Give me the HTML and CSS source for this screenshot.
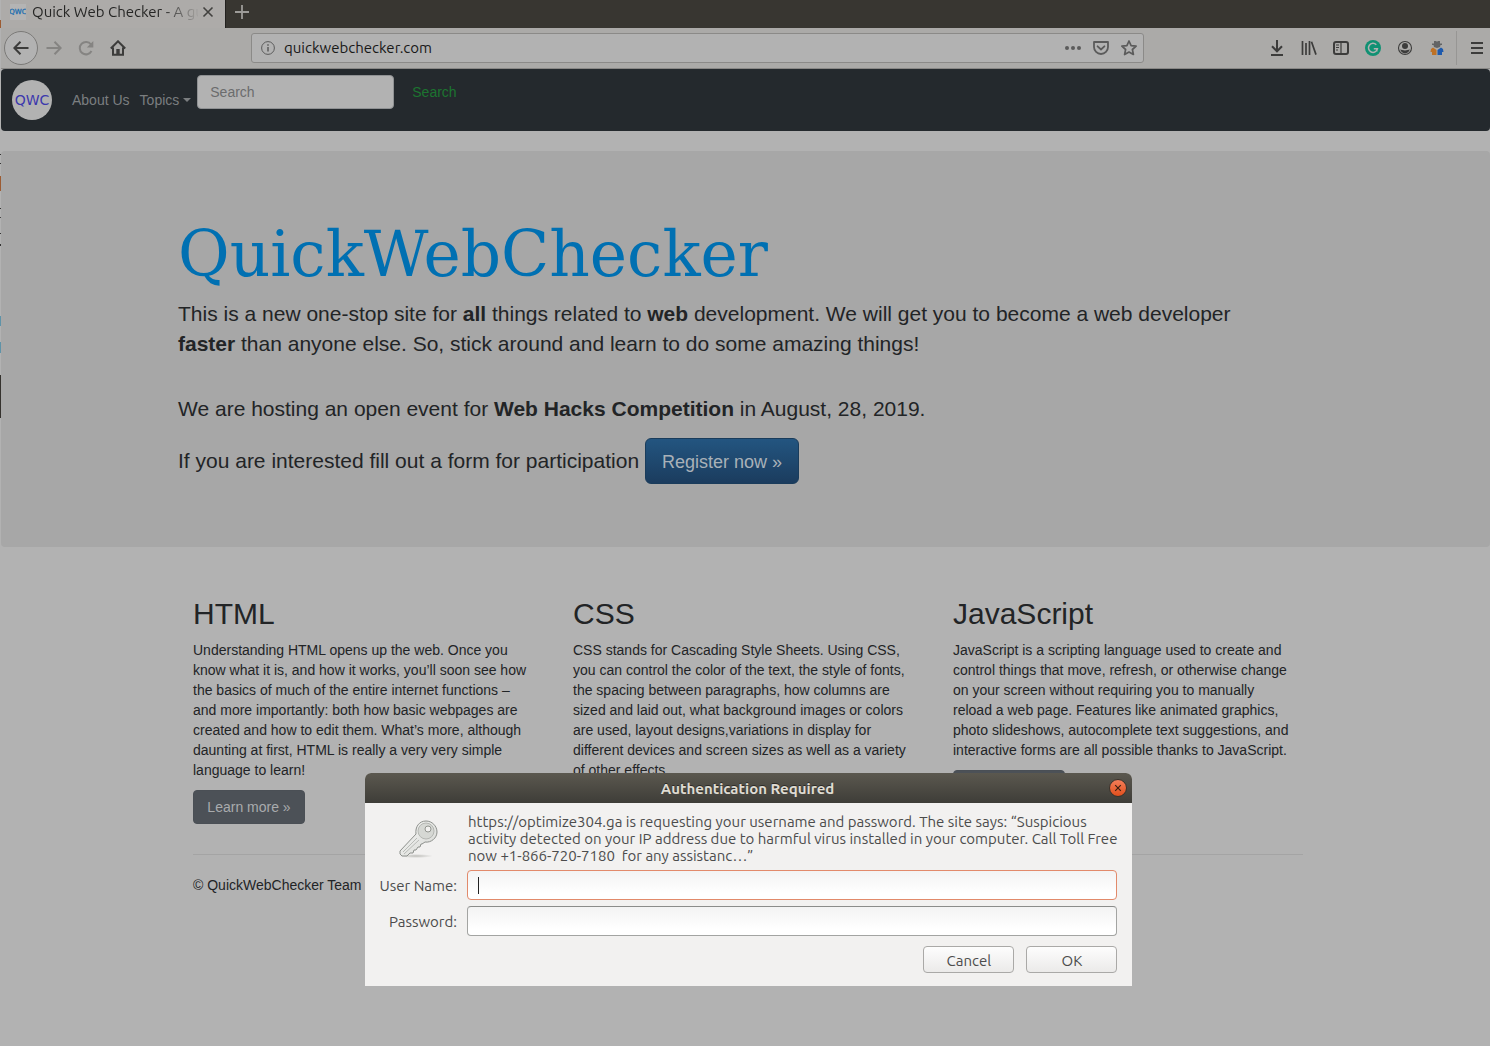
FILE: index.html
```html
<!DOCTYPE html>
<html lang="en">
<head>
<meta charset="utf-8">
<title>Quick Web Checker</title>
<link rel="stylesheet" href="styles.css">
</head>
<body>
<div class="window">
  <header class="tabstrip">
    <div class="tab">
      <svg class="favicon" viewBox="0 0 16 16" aria-hidden="true"><rect width="16" height="16" fill="#b4b4b4"/><text x="8" y="10" text-anchor="middle" font-family="DejaVu Sans, sans-serif" font-size="7" fill="#1f6fb0" stroke="#1f6fb0" stroke-width=".3">QWC</text></svg>
      <span class="tab-title">Quick Web Checker - A gu</span>
      <button class="icon-button tab-close" aria-label="Close tab"><svg width="12" height="12" viewBox="0 0 12 12"><path d="M1.500 1.500l9 9M10.500 1.500l-9 9" stroke="#42413f" stroke-width="1.600" fill="none"/></svg></button>
    </div>
    <button class="icon-button new-tab" aria-label="New tab"><svg width="14" height="14" viewBox="0 0 14 14"><path d="M7 0v14M0 7h14" stroke="#9d9c99" stroke-width="1.800"/></svg></button>
  </header>

  <div class="toolbar">
    <div class="nav-buttons">
      <button class="icon-button back" aria-label="Back"><svg viewBox="0 0 16 16"><path d="M15.500 8H1.500M7.500 1.800L1.300 8l6.200 6.200" class="stroke"/></svg></button>
      <button class="icon-button faded" aria-label="Forward"><svg viewBox="0 0 16 16"><path d="M.500 8h14M8.500 1.800L14.700 8l-6.200 6.200" class="stroke"/></svg></button>
      <button class="icon-button faded" aria-label="Reload"><svg viewBox="0 0 16 16"><path d="M13 4.500A6.200 6.200 0 1 0 13.500 11" class="stroke"/><path d="M15.300 1v6.500H8.800z" fill="#858482"/></svg></button>
      <button class="icon-button" aria-label="Home"><svg viewBox="0 0 16 16"><path d="M.800 8.500L8 1.300l7.200 7.200M3 7.500v7.300h10V7.500" class="stroke"/><path d="M6.300 14.500V9h3.400v5.500z" fill="#3c3c3b"/></svg></button>
    </div>
    <div class="address">
      <svg class="info" viewBox="0 0 14 14"><circle cx="7" cy="7" r="6.400" fill="none" stroke="#5b5b5b"/><path d="M7 6v4.500M7 3.300v1.500" stroke="#5b5b5b" stroke-width="1.500"/></svg>
      <input class="url" type="text" value="quickwebchecker.com" aria-label="Address">
      <button class="icon-button" aria-label="Page actions"><svg viewBox="0 0 16 16" fill="#5b5b5b"><circle cx="2" cy="8" r="2"/><circle cx="8" cy="8" r="2"/><circle cx="14" cy="8" r="2"/></svg></button>
      <button class="icon-button" aria-label="Save to Pocket"><svg viewBox="0 0 16 16" fill="none" stroke="#5b5b5b" stroke-width="1.800"><path d="M1 2h14v5a7 7 0 0 1-14 0z" stroke-linejoin="round"/><path d="M4.600 6.300L8 9.500l3.400-3.200" stroke-linecap="round"/></svg></button>
      <button class="icon-button" aria-label="Bookmark"><svg viewBox="0 0 16 16" fill="none" stroke="#5b5b5b" stroke-width="1.700" stroke-linejoin="round"><path d="M8 1l2.100 4.600 5 .5-3.700 3.400 1 5L8 12l-4.400 2.500 1-5L.900 6.100l5-.5z"/></svg></button>
    </div>
    <div class="tools">
      <button class="icon-button" aria-label="Downloads"><svg viewBox="0 0 16 16"><path d="M8 0v11M3 6.300l5 5 5-5M2 15h12" class="stroke"/></svg></button>
      <button class="icon-button" aria-label="Library"><svg viewBox="0 0 16 16"><path d="M1.500 1v14M5 3v12M8.500 1v14M10.500 1.800L15 14.600" class="stroke thin"/></svg></button>
      <button class="icon-button" aria-label="Sidebars"><svg viewBox="0 0 16 16"><rect x="1" y="2" width="14" height="12" rx="2" class="stroke"/><path d="M8 2v12M3 5h3M3 7.500h3M3 10h2" stroke="#3c3c3b" stroke-width="1.200"/></svg></button>
      <button class="icon-button" aria-label="Grammar"><svg viewBox="0 0 16 16"><circle cx="8" cy="8" r="8" fill="#109173"/><path d="M11.300 4.800A4.500 4.500 0 1 0 12.400 8.800H8.800M11.800 8.800v2.700" fill="none" stroke="#b2b2b2" stroke-width="1.500"/></svg></button>
      <button class="icon-button" aria-label="Account"><svg viewBox="0 0 16 16" fill="#3c3c3b"><circle cx="8" cy="8" r="6.500" fill="none" stroke="#3c3c3b" stroke-width="1.100"/><circle cx="8" cy="6" r="3"/><path d="M3.300 9.300c2 1.500 7.400 1.500 9.400 0-.7 5.500-8.700 5.500-9.400 0z"/></svg></button>
      <button class="icon-button" aria-label="User switcher"><svg viewBox="0 0 16 16"><path d="M5 1h2l1 .8L9 1h2v2.500h2V5h-1.500L11 7 8 8 5 7l-.5-2H3V3.500h2z" fill="#636465"/><path d="M2 9l2-1.500L7.500 10v5H3v-3H1.500z" fill="#bd7126"/><path d="M14 9l-2-1.500L8.500 10v5H13v-3h1.500z" fill="#1e5aad"/></svg></button>
      <button class="icon-button menu" aria-label="Menu"><svg viewBox="0 0 16 16"><path d="M2 3h12M2 8h12M2 13h12" class="stroke"/></svg></button>
    </div>
  </div>

  <nav class="navbar">
    <a class="brand" href="#"><svg width="40" height="40" viewBox="0 0 40 40" role="img" aria-label="QWC"><circle cx="20" cy="20" r="20" fill="#b2b2b2"/><text x="20" y="25" text-anchor="middle" font-family="DejaVu Sans, sans-serif" font-size="14" fill="#3c38ad">QWC</text></svg></a>
    <a class="nav-link" href="#">About Us</a>
    <a class="nav-link dropdown" href="#">Topics</a>
    <form class="search">
      <input class="search-box" type="text" placeholder="Search" aria-label="Search">
      <button class="search-button" type="button">Search</button>
    </form>
  </nav>

  <main>
    <section class="jumbotron">
      <div class="container">
        <h1>QuickWebChecker</h1>
        <p>This is a new one-stop site for <b>all</b> things related to <b>web</b> development. We will get you to become a web developer <b>faster</b> than anyone else. So, stick around and learn to do some amazing things!</p>
        <p class="event">We are hosting an open event for <b>Web Hacks Competition</b> in August, 28, 2019.</p>
        <p>If you are interested fill out a form for participation <a class="register" href="#">Register now »</a></p>
      </div>
    </section>
    <div class="container padded">
      <div class="columns">
        <section class="column">
          <h2>HTML</h2>
          <p>Understanding HTML opens up the web. Once you know what it is, and how it works, you’ll soon see how the basics of much of the entire internet functions – and more importantly: both how basic webpages are created and how to edit them. What’s more, although daunting at first, HTML is really a very very simple language to learn!</p>
          <a class="more" href="#">Learn more »</a>
        </section>
        <section class="column">
          <h2>CSS</h2>
          <p>CSS stands for Cascading Style Sheets. Using CSS, you can control the color of the text, the style of fonts, the spacing between paragraphs, how columns are sized and laid out, what background images or colors are used, layout designs,variations in display for different devices and screen sizes as well as a variety of other effects.</p>
        </section>
        <section class="column">
          <h2>JavaScript</h2>
          <p>JavaScript is a scripting language used to create and control things that move, refresh, or otherwise change on your screen without requiring you to manually reload a web page. Features like animated graphics, photo slideshows, autocomplete text suggestions, and interactive forms are all possible thanks to JavaScript.</p>
          <a class="more" href="#" aria-label="Learn more about JavaScript"></a>
        </section>
      </div>
      <footer>© QuickWebChecker Team</footer>
    </div>
  </main>
</div>

<form class="dialog" role="dialog" aria-labelledby="dialog-title">
  <div class="titlebar">
    <h2 class="dialog-title" id="dialog-title">Authentication Required</h2>
    <button class="icon-button dialog-close" type="button" aria-label="Close"><svg width="18" height="18" viewBox="0 0 18 18"><defs><linearGradient id="orange" x2="0" y2="1"><stop offset="0" stop-color="#f47f5b"/><stop offset="1" stop-color="#e04e1b"/></linearGradient></defs><circle cx="9" cy="9" r="8.500" fill="url(#orange)" stroke="#35322c"/><path d="M6.200 6.200l5.600 5.600M11.800 6.200l-5.600 5.600" stroke="#3a1f12" stroke-width="1.200"/></svg></button>
  </div>
  <div class="dialog-body">
    <svg class="key" width="40" height="40" viewBox="0 0 40 40" aria-hidden="true"><defs><linearGradient id="steel" x2="1" y2="1"><stop offset="0" stop-color="#fafaf9"/><stop offset="1" stop-color="#d3d5d1"/></linearGradient><radialGradient id="shade"><stop offset="0" stop-color="#bdbdb9"/><stop offset="1" stop-color="#f2f1f0"/></radialGradient></defs><ellipse cx="18" cy="37" rx="17" ry="2" fill="url(#shade)"/><path d="M2 32L18 15C17 8 21 2 28 2c6 0 11 5 11 11s-6 11-12 10l-3 2-1 0-1 3-2 0-2 3-2 0-1 3-3 0-3 3H4l-2-2z" fill="url(#steel)" stroke="#8d908c"/><circle cx="28" cy="12" r="8" fill="#d6d8d4" stroke="#b4b6b2"/><circle cx="30" cy="10" r="3" fill="#f2f1f0" stroke="#92958f"/><path d="M5 33L19 19M6 35L21 21" stroke="#b9bbb7" fill="none"/></svg>
    <p class="message">https://optimize304.ga is requesting your username and password. The site says: “Suspicious<br>activity detected on your IP address due to harmful virus installed in your computer. Call Toll Free<br>now +1-866-720-7180&nbsp; for any assistanc…”</p>
    <label for="user">User Name:</label>
    <input id="user" class="field focused" type="text">
    <label for="pass">Password:</label>
    <input id="pass" class="field" type="password">
    <div class="actions">
      <button type="button">Cancel</button>
      <button type="button">OK</button>
    </div>
  </div>
</form>
</body>
</html>
```
FILE: styles.css
```css
* { box-sizing: border-box; }
body {
  margin: 0;
  min-height: 100vh;
  padding-left: 1px;
  position: relative;
  background: #b2b2b2;
  font: 14px/20px "Liberation Sans", Arial, sans-serif;
  color: #222426;
}
/* edge of the window behind */
body::before {
  content: "";
  position: absolute;
  left: 0;
  top: 0;
  width: 1px;
  height: 418px;
  background: linear-gradient(#b2b2b2 20px, #9c5b32 20px 28px, #b2b2b2 28px 154px, #333 154px 155px, #b2b2b2 155px 163px, #333 163px 164px, #b2b2b2 164px 176px, #9c5b32 176px 191px, #b2b2b2 191px 208px, #333 208px 209px, #b2b2b2 209px 217px, #444 217px 218px, #b2b2b2 218px 233px, #333 233px 234px, #b2b2b2 234px 244px, #333 244px 246px, #b2b2b2 246px 316px, #5f93a8 316px 326px, #b2b2b2 326px 342px, #5f93a8 342px 353px, #b2b2b2 353px 375px, #35322e 375px);
}
p, h1, h2 { margin: 0; }
button, input { font: inherit; }
a { text-decoration: none; }
.icon-button {
  display: flex;
  align-items: center;
  justify-content: center;
  padding: 0;
  border: 0;
  background: none;
  color: inherit;
}
.stroke { fill: none; stroke: #3c3c3b; stroke-width: 2; }
.thin { stroke-width: 1.7; }

.tabstrip, .toolbar { font-family: Ubuntu, "Noto Sans", sans-serif; font-size: 15px; }
.tabstrip {
  display: flex;
  height: 28px;
  background: #383631;
}
.tab {
  display: flex;
  align-items: center;
  width: 225px;
  padding: 0 11px 4px 9px;
  border-right: 1px solid #22211f;
  background: #adaba9;
  color: #262625;
}
.favicon { flex: none; width: 16px; height: 16px; margin-right: 6px; }
.tab-title {
  flex: 1;
  overflow: hidden;
  white-space: nowrap;
  -webkit-mask-image: linear-gradient(90deg, #000 130px, transparent 168px);
  mask-image: linear-gradient(90deg, #000 130px, transparent 168px);
}
.tab-close { width: 12px; margin-left: 4px; }
.new-tab { width: 32px; height: 23px; }
.toolbar {
  display: flex;
  align-items: center;
  height: 41px;
  padding-left: 3px;
  border-bottom: 1px solid #888785;
  background: #abaaa8;
}
.toolbar .icon-button { flex: none; width: 32px; height: 34px; }
.toolbar .icon-button svg { width: 16px; height: 16px; }
.nav-buttons { display: flex; flex: 1; }
.nav-buttons .back {
  width: 34px;
  border: 1px solid #7b7a78;
  border-radius: 50%;
  background: #b2b2b2;
}
.faded .stroke { stroke: #858482; }
.address {
  display: flex;
  align-items: center;
  flex: 0 1 893px;
  height: 30px;
  padding: 0 0 0 9px;
  border: 1px solid #8b8a88;
  border-radius: 3px;
  background: #b2b2b2;
}
.address .icon-button { width: 28px; height: 28px; }
.info { flex: none; width: 14px; height: 14px; }
.url {
  flex: 1;
  min-width: 0;
  padding: 0 9px;
  border: 0;
  outline: 0;
  background: none;
  color: #181818;
}
.tools { display: flex; flex: 0 0 229px; margin-left: 117px; }
.toolbar .menu {
  width: 34px;
  margin-left: 3px;
  padding-left: 6px;
  border-left: 1px solid #979694;
}

.navbar {
  display: flex;
  align-items: center;
  height: 62px;
  padding: 0 11px;
  border-radius: 4px;
  background: #24292d;
}
.brand { height: 40px; margin-right: 20px; }
.nav-link { margin-right: 10px; color: #7b7e80; }
.dropdown { display: flex; align-items: center; gap: 4px; margin-right: 6px; }
.dropdown::after {
  content: "";
  border: 4px solid transparent;
  border-top-color: #7b7e80;
  border-bottom: 0;
}
.search { display: flex; align-self: flex-start; padding-top: 6px; }
.search-box {
  width: 197px;
  height: 34px;
  padding: 6px 12px;
  border: 1px solid #8f9193;
  border-radius: 4px;
  background: #b2b2b2;
}
.search-box::placeholder { color: #6b6c6d; }
.search-button { padding: 0 18px; border: 0; background: none; color: #1c7430; }

main { padding: 20px 0 0; }
.container { max-width: 1145px; margin: 0 auto; padding-left: 5px; }
.container.padded { padding: 0 15px 0 20px; }
.jumbotron {
  padding: 70px 0 48px;
  border-radius: 4px;
  background: #a7a7a7;
  font-size: 21px;
  line-height: 30px;
}
.jumbotron p { max-width: 1100px; margin-bottom: 15px; }
.jumbotron .event { margin: 35px 0 14px; }
h1 {
  margin-bottom: 10px;
  font: 63px/68px "DejaVu Serif", serif;
  color: #0070b2;
}
.register {
  display: inline-block;
  height: 46px;
  padding: 10px 16px;
  border: 1px solid #1a3c5b;
  border-radius: 6px;
  background: linear-gradient(#235580, #1b3c5e);
  font-size: 18px;
  line-height: 26px;
  color: #a9b1b8;
}
.columns {
  display: grid;
  grid-template-columns: repeat(3, 1fr);
  column-gap: 30px;
  padding: 50px 0 30px;
}
.column h2 { margin-bottom: 10px; font-size: 30px; font-weight: 400; line-height: 33px; }
.column p { max-width: 340px; margin-bottom: 10px; }
.more {
  display: inline-block;
  min-width: 112px;
  min-height: 34px;
  padding: 6px 12px;
  border: 1px solid #4a4f55;
  border-radius: 4px;
  background: #4c5157;
  color: #a9abad;
  text-align: center;
}
footer { padding: 20px 0; border-top: 1px solid #a4a4a4; }

.dialog {
  position: absolute;
  left: calc(50% - 380px);
  top: 773px;
  width: 767px;
  border-radius: 6px 6px 0 0;
  background: #f2f1f0;
  font: 15px/17px Ubuntu, "Noto Sans", sans-serif;
  color: #4c4c4c;
}
.titlebar {
  display: flex;
  align-items: center;
  height: 30px;
  padding: 0 5px 0 21px;
  border-radius: 6px 6px 0 0;
  background: linear-gradient(#5b584f, #3e3d38);
}
.dialog-title {
  flex: 1;
  font-size: 15px;
  font-weight: 700;
  text-align: center;
  text-shadow: 0 -1px #2b2a27;
  color: #dfdbd2;
}
.dialog-body {
  display: grid;
  grid-template-columns: 78px 1fr;
  gap: 6px 10px;
  align-items: center;
  padding: 10px 15px 13px 14px;
}
.key { justify-self: center; }
.message { padding-left: 1px; white-space: nowrap; }
.dialog-body label { text-align: right; white-space: nowrap; }
.field {
  width: 100%;
  height: 30px;
  padding: 0 10px;
  border: 1px solid #a3a4a2;
  border-top-color: #8b8c8a;
  border-radius: 4px;
  outline: 0;
  background: linear-gradient(#f3f3f3, #fff 80%);
}
.field.focused {
  border-color: #e28a6b;
  background: linear-gradient(#222, #222) 10px center / 1px 17px no-repeat, linear-gradient(#f3f3f3, #fff 80%);
  caret-color: transparent;
}
.actions { display: flex; grid-column: 2; justify-content: flex-end; gap: 12px; padding-top: 4px; }
.actions button {
  width: 91px;
  height: 27px;
  padding: 1px 0 0;
  border: 1px solid #aaa9a7;
  border-radius: 4px;
  background: linear-gradient(#fdfdfd, #ebeae9);
  color: #4c4c4c;
}
```
